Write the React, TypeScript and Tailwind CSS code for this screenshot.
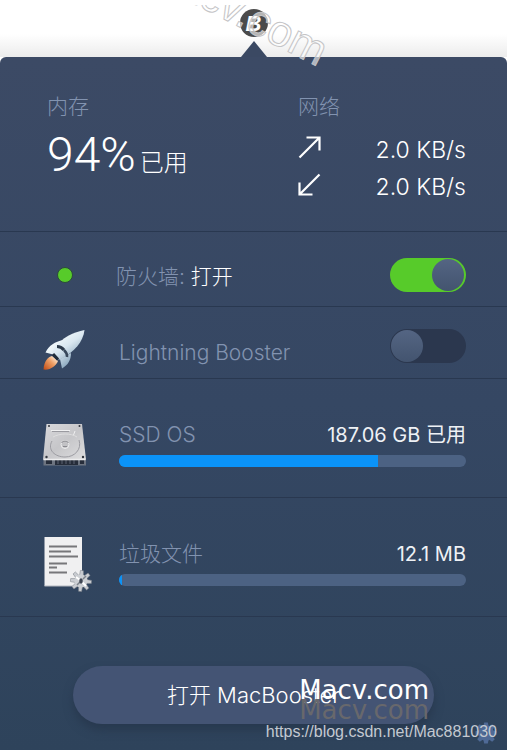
import { useState, type ReactNode } from "react"
import clsx from "clsx"

const SPEEDS = [
  { id: "up", label: "上传", value: "2.0 KB/s", path: "M1.5 21.5 20.5 2.5M8.5 1.5h13v13" },
  { id: "down", label: "下载", value: "2.0 KB/s", path: "M21.5 1.5 2.5 20.5M1.5 9.5v12h13" },
]

const TEETH = [0, 45, 90, 135, 180, 225, 270, 315]

function Rocket() {
  return (
    <svg viewBox="0 0 48 48" className="size-12">
      <defs>
        <linearGradient id="hull" x1="0.2" y1="0.1" x2="0.8" y2="0.9">
          <stop offset="0" stopColor="#f6fbfd" />
          <stop offset="0.5" stopColor="#d9e7f0" />
          <stop offset="1" stopColor="#8fabc1" />
        </linearGradient>
        <linearGradient id="flame" x1="1" y1="0" x2="0" y2="1">
          <stop offset="0.1" stopColor="#fff0dc" />
          <stop offset="0.45" stopColor="#eea067" />
          <stop offset="1" stopColor="#c24a12" />
        </linearGradient>
      </defs>
      <path d="M11 30c-4 1-8 5-8.500 13.500C9 44.500 15 40 17 35z" fill="url(#flame)" />
      <path d="M22 14c-8 2-14 5-17.500 12.500L14 29zM30 27c0 7-3 12-9 15.500L19 33z" fill="url(#hull)" />
      <path d="M43.500 4C33 6 21 11 12.500 23.500c-1 2-1.500 4-.500 5.500S17 34 19 33.500C34 25.500 42 16 43.500 4z" fill="url(#hull)" />
      <path d="M16 20.500c3 0 5 1 7 3.500" stroke="#2c3a4b" strokeWidth="3" fill="none" />
      <path d="M23 24c2 2 3.500 4 3 7" stroke="#37475a" strokeWidth="2.500" fill="none" />
      <path d="m12 28 5 5.500" stroke="#202c3a" strokeWidth="3" />
    </svg>
  )
}

function Drive() {
  return (
    <svg viewBox="0 0 48 48" className="size-12">
      <defs>
        <linearGradient id="metal" x1="0" y1="0" x2="1" y2="1">
          <stop offset="0" stopColor="#d9d9dc" />
          <stop offset="0.5" stopColor="#c6c6c9" />
          <stop offset="1" stopColor="#dededf" />
        </linearGradient>
      </defs>
      <path d="M2.500 39h42.500v6.500H2.500z" fill="#6d7480" />
      <path d="M5 40h6v4H5zM14 40h23v5H14zM39 40h4v4h-4z" fill="#262d3a" />
      <path d="M17 40v4M21 40v4M25 40v4M29 40v4M33 40v4" stroke="#5c6472" />
      <path d="M5.500 4h35.500l4 35.500h-43z" fill="url(#metal)" />
      <path d="M2.500 39.500h42" stroke="#ededee" strokeWidth="1.500" />
      <path d="M11 11.500h17" stroke="#9a9aa0" strokeWidth="1" />
      <path d="M10 10.500h19M34 11l-1.500 4" stroke="#f0f0f1" strokeWidth="1" fill="none" />
      <path d="M11 21c-5 9 3 16 13 16s17-8 14-17" stroke="#9c9ca2" strokeWidth="1" fill="none" />
      <path d="M12 17c7-4 18-4 24 0" stroke="#dededf" strokeWidth="1" fill="none" />
      <circle cx="24" cy="24.500" r="4" fill="#c2c2c5" stroke="#ededee" />
      <path d="M20.500 23c1-2.500 6-2.500 7 0M22 26.500h4" stroke="#88888e" strokeWidth="1" fill="none" />
      <g fill="#33373f">
        <circle cx="8" cy="6" r="1" />
        <circle cx="38.500" cy="6" r="1" />
        <circle cx="5.500" cy="37" r="1.200" />
        <circle cx="42" cy="37" r="1.200" />
      </g>
    </svg>
  )
}

function JunkFile() {
  return (
    <svg viewBox="0 0 48 54" className="h-[54px] w-12 overflow-visible">
      <path d="M3.500-2h37.500v49H3.500z" fill="#f0f0f1" />
      <path d="M3.500 47h37.500" stroke="#b5b9c0" />
      <path d="M8 7.500h28M8 12.500h22M8 17.500h29M8 24.500h18M8 28.500h8M8 33.500h18" stroke="#77777a" strokeWidth="2" />
      <g transform="translate(40 42)">
        {TEETH.map(a => (
          <path key={a} d="M-2-5-1.500-10.500h3L2-5z" fill="#c9ccd1" stroke="#787d85" strokeWidth="0.500" transform={`rotate(${a + 5})`} />
        ))}
        <circle r="6.500" fill="#cdd0d4" />
        <path d="M-5-4-1-1M1 1l4 4" stroke="#fff" strokeWidth="2" />
        <path d="M-4 4-1 1M2-2l3-3" stroke="#7d828a" strokeWidth="1.500" />
        <ellipse rx="1.800" ry="2.800" fill="#3f4653" />
      </g>
    </svg>
  )
}

function Toggle({ id, checked, onChange }: { id: string; checked: boolean; onChange: (v: boolean) => void }) {
  return (
    <span className="relative inline-flex h-[34px] w-[76px] shrink-0">
      <input
        id={id}
        type="checkbox"
        role="switch"
        checked={checked}
        onChange={e => onChange(e.target.checked)}
        className="size-full cursor-pointer appearance-none rounded-full bg-[#2b374e] checked:bg-[#57cb2a]"
      />
      <span
        className={clsx(
          "pointer-events-none absolute top-px size-8 rounded-full bg-linear-to-b from-[#546583] to-[#43546f]",
          checked ? "right-0.5" : "left-px"
        )}
      />
    </span>
  )
}

interface UsageProps {
  icon: ReactNode
  label: string
  value: string
  percent: number
}

function UsageRow({ icon, label, value, percent }: UsageProps) {
  return (
    <section className="flex gap-[30px] border-b border-[#293850] px-[41px] pt-[41px] pb-[30px]">
      <div className="-mb-2 h-12 w-12 shrink-0">{icon}</div>
      <div className="flex-1">
        <div className="flex justify-between leading-[30px]">
          <span className="text-[21px] font-light text-[#8293b0]">{label}</span>
          <span className="text-[20px] text-[#eef1f5]">{value}</span>
        </div>
        <div className="mt-[5px] h-3 overflow-hidden rounded-md bg-[#4c6283]">
          <div className="h-full bg-[#0b93f8]" style={{ width: `${percent}%` }} />
        </div>
      </div>
    </section>
  )
}

export default function App() {
  const [firewall, setFirewall] = useState(true)
  const [booster, setBooster] = useState(false)

  return (
    <div className="relative overflow-hidden bg-white font-['Inter','Noto_Sans_CJK_SC',sans-serif]">
      <header className="flex flex-col items-center bg-linear-to-b from-white from-60% to-[#ececec] pt-[9px]">
        <span className="flex size-7 items-center justify-center rounded-full bg-[#4b4b4b] font-['Liberation_Sans',sans-serif] text-[22px] font-bold text-white italic">
          B
        </span>
        <svg viewBox="0 0 26 16" className="mt-1 h-4 w-[26px]">
          <path d="M13 0 26 16H0z" fill="#3b4963" />
        </svg>
      </header>

      <main className="rounded-t-md bg-linear-to-b from-[#3c4a65] via-[#354763] to-[#2e435b]">
        <section className="flex border-b border-[#293850] pt-[38px] pr-[41px] pb-[25px] pl-[47px]">
          <div className="flex-1">
            <h2 className="text-[21px] leading-6 font-light text-[#8293b0]">内存</h2>
            <p className="mt-3 flex items-baseline gap-1 font-light text-white">
              <span className="font-['Roboto',sans-serif] text-[48px] leading-12">94%</span>
              <span className="text-2xl">已用</span>
            </p>
          </div>
          <div className="w-[168px]">
            <h2 className="text-[21px] leading-6 font-light text-[#8293b0]">网络</h2>
            <ul className="mt-[13px] text-[23px] leading-[37px] font-light text-white">
              {SPEEDS.map(({ id, label, value, path }) => (
                <li key={id} className="flex items-start justify-between">
                  <svg viewBox="0 0 23 23" aria-label={label} className="mt-1 size-[23px]">
                    <path d={path} fill="none" stroke="currentColor" strokeWidth="2.200" />
                  </svg>
                  {value}
                </li>
              ))}
            </ul>
          </div>
        </section>

        <section className="flex items-center gap-[27px] border-b border-[#293850] px-[41px] pt-[26px] pb-3.5">
          <span className="flex w-12 justify-center">
            <span className="size-4 rounded-full border border-[#2b4a3c] bg-[#57cb2a]" />
          </span>
          <label htmlFor="firewall" className="flex-1 self-end text-[21px] leading-[30px] font-light text-[#8293b0]">
            防火墙: <span className="text-white">{firewall ? "打开" : "关闭"}</span>
          </label>
          <Toggle id="firewall" checked={firewall} onChange={setFirewall} />
        </section>

        <section className="flex items-center gap-[30px] border-b border-[#293850] px-[41px] pt-[19px] pb-3">
          <div className="h-10 w-12">
            <Rocket />
          </div>
          <label htmlFor="booster" className="flex-1 self-end text-[21px] leading-[26px] font-light text-[#8293b0]">
            Lightning Booster
          </label>
          <Toggle id="booster" checked={booster} onChange={setBooster} />
        </section>

        <UsageRow icon={<Drive />} label="SSD OS" value="187.06 GB 已用" percent={74.6} />
        <UsageRow icon={<JunkFile />} label="垃圾文件" value="12.1 MB" percent={1} />

        <footer className="relative px-[73px] pt-[49px] pb-[26px]">
          <button className="h-[58px] w-full rounded-full bg-[#445474] text-[22px] font-light text-white shadow-[0_6px_10px_#28394f]">
            打开 MacBooster
          </button>
          <button aria-label="设置" className="absolute right-2.5 bottom-1.5 text-[#4f6a96]">
            <svg viewBox="-12 -12 24 24" className="size-[22px]">
              {TEETH.map(a => (
                <path key={a} d="M-3-6-2-11.500h4L3-6z" fill="currentColor" transform={`rotate(${a})`} />
              ))}
              <circle r="5" fill="none" stroke="currentColor" strokeWidth="7" />
            </svg>
          </button>
          <p className="pointer-events-none absolute right-[78px] bottom-[30px] font-['DejaVu_Sans',sans-serif] text-[26px] leading-5">
            <span className="block text-white">Macv.com</span>
            <span className="block text-[#68686c]" aria-hidden="true">Macv.com</span>
          </p>
          <a
            href="https://blog.csdn.net/Mac881030"
            className="absolute right-2.5 bottom-2 font-['Liberation_Sans',sans-serif] text-base leading-5 text-[#c3c9d1]"
          >
            https://blog.csdn.net/Mac881030
          </a>
        </footer>
      </main>

      <div className="pointer-events-none absolute inset-x-0 top-[5px] h-20 overflow-hidden">
        <svg viewBox="0 0 160 80" className="mx-auto h-20 w-40 overflow-visible">
          <text
            transform="translate(144 62) rotate(27)"
            textAnchor="end"
            className="fill-white/60 stroke-[#c4c4c6] font-['Liberation_Sans',sans-serif] text-[44px]"
          >
            Macv.com
          </text>
        </svg>
      </div>
    </div>
  )
}
